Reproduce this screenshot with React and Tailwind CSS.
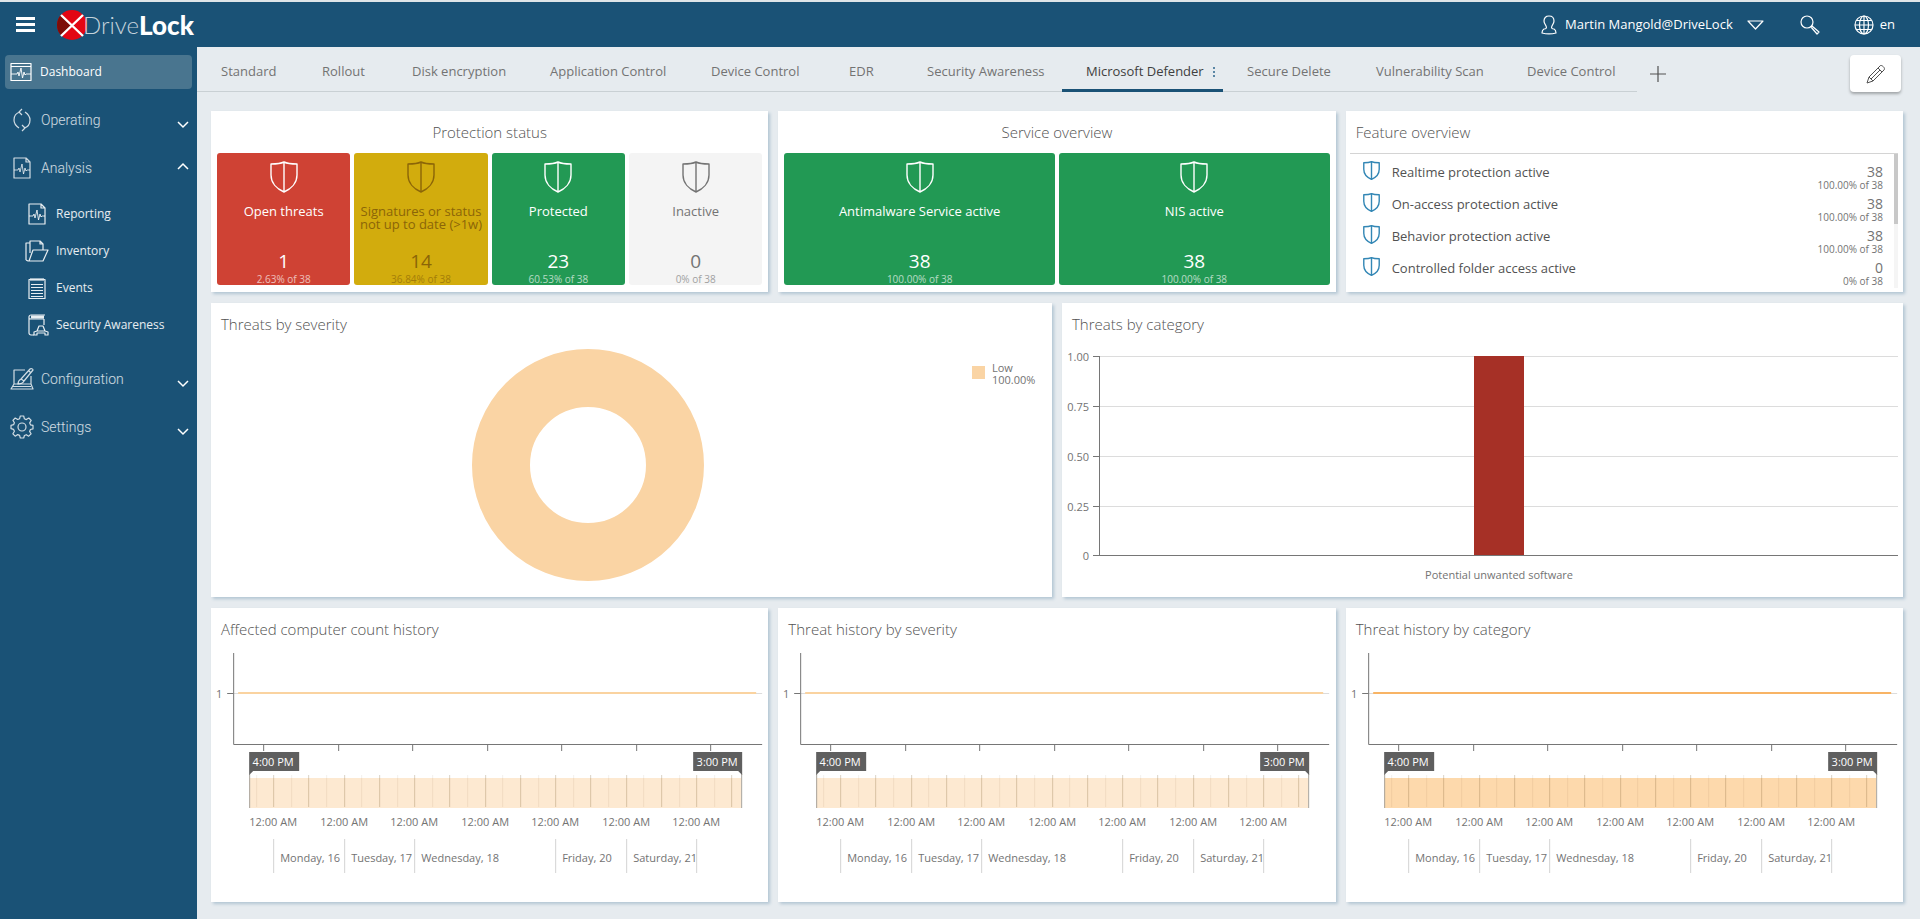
import React from 'react';

const tabs = [
  { label: 'Standard', width: 'w-[101px]' },
  { label: 'Rollout', width: 'w-[90px]' },
  { label: 'Disk encryption', width: 'w-[138px]' },
  { label: 'Application Control', width: 'w-[161px]' },
  { label: 'Device Control', width: 'w-[138px]' },
  { label: 'EDR', width: 'w-[78px]' },
  { label: 'Security Awareness', width: 'w-[159px]' },
  { label: 'Microsoft Defender', width: 'w-[161px]', active: true },
  { label: 'Secure Delete', width: 'w-[129px]' },
  { label: 'Vulnerability Scan', width: 'w-[151px]' },
  { label: 'Device Control', width: 'w-[134px]' },
];

const features = [
  { label: 'Realtime protection active', count: 38, share: '100.00% of 38' },
  { label: 'On-access protection active', count: 38, share: '100.00% of 38' },
  { label: 'Behavior protection active', count: 38, share: '100.00% of 38' },
  { label: 'Controlled folder access active', count: 0, share: '0% of 38' },
];

const Icon = ({ children, className = 'size-6', box = '0 0 24 24' }) => (
  <svg
    viewBox={box}
    className={className}
    fill="none"
    stroke="currentColor"
    strokeWidth="1.2"
    strokeLinejoin="round"
    aria-hidden="true"
  >
    {children}
  </svg>
);

const Shield = ({ className }) => (
  <Icon className={className} box="0 0 28 32">
    <path
      d="M14 1C10 3 5 3 1 3v11c0 8 6 14 13 17 7-3 13-9 13-17V3c-4 0-9 0-13-2zM14 1v30"
      vectorEffect="non-scaling-stroke"
      strokeWidth="1.4"
    />
  </Icon>
);

const DashboardIcon = () => (
  <Icon>
    <path d="M2 3.5h20v17H2zM2 6.5h20" />
    <path d="M2 14h6l1-2 1 4 2-8 1.500 10 1.500-6 1 3 1-1h5" strokeWidth="0.9" />
  </Icon>
);

const OperatingIcon = () => (
  <Icon>
    <path d="M10 4C6 5 4 8 4 12c0 4 2 6 5 8M14 20c4-1 6-4 6-8 0-4-2-6-5-8M12 1 9 4l3 3M12 23l3-3-3-3" />
  </Icon>
);

const ReportIcon = () => (
  <Icon>
    <path d="M4 2h12l4 4v16H4zM16 2v4h4" />
    <path d="M4 14h4l1-2 1 4 2-8 1.500 10 1.500-6 1 3 1-1h3" strokeWidth="0.9" />
  </Icon>
);

const InventoryIcon = () => (
  <Icon>
    <path d="M1 21V4h4V2h10l3 3v6M5 4v10M15 2v3h3M1 21l2 1h15l5-11H8L4 22" />
  </Icon>
);

const EventsIcon = () => (
  <Icon>
    <path d="M4 3.5h16v19H4zM6 2v3M8 2v3M10 2v3M12 2v3M14 2v3M16 2v3M18 2v3M6 8.5h12M6 11.5h12M6 14.5h12M6 17.5h12M6 20.5h12" />
  </Icon>
);

const AwarenessIcon = () => (
  <Icon>
    <path d="M9 22H6a2 2 0 0 1-2-2V4a2 2 0 0 1 2-2h14M19 6v6M4 5c0 1 1 1 2 1h13M6 3.3h13M6 4.600h13" />
    <path d="M9 22v-3l3-1 2-5h4l2 5 3 1v3h-3v-2h-8v2zM12 18h8" />
  </Icon>
);

const ConfigurationIcon = () => (
  <Icon>
    <path d="M15 3H4v14h17V9M4 17l-3 5h22l-2-5M3 19.500h18" />
    <path d="M8 17c0-3 1-4 3-5l9-10c1-1 3 0 3 1l-9 11c-1 2-3 3-6 3zM11 12l3 2M19 4l2 2" />
  </Icon>
);

const SettingsIcon = () => (
  <Icon>
    <path d="M10.300 1h3.400l.7 2.800 1.900.8L18.800 3l2.400 2.400-1.500 2.500.8 1.900 2.500.6v3.400l-2.600.7-.8 1.900 1.500 2.400-2.400 2.400-2.400-1.500-1.900.8-.7 2.500h-3.400l-.7-2.600-1.900-.8-2.500 1.600-2.300-2.400 1.500-2.500-.8-1.900-2.600-.7v-3.300l2.600-.7.8-1.900-1.500-2.500L5.200 3l2.500 1.500 1.900-.8z" />
    <circle cx="12" cy="12" r="4" />
  </Icon>
);

const Chevron = ({ up }) => (
  <svg
    viewBox="0 0 12 8"
    className={`ml-auto h-2 w-3 ${up ? 'mb-1 rotate-180' : 'mt-[10px]'}`}
    fill="none"
    stroke="white"
    strokeWidth="1.5"
    aria-hidden="true"
  >
    <path d="M1 1l5 5 5-5" />
  </svg>
);

const NavGroup = ({ icon, label, up, className = '' }) => (
  <button
    className={`flex h-8 w-full items-center gap-[7px] pr-2 pl-[10px] text-left font-[Roboto,sans-serif] text-[14px] font-light text-white/80 ${className}`}
  >
    {icon}
    <span>{label}</span>
    <Chevron up={up} />
  </button>
);

const NavLink = ({ icon, label }) => (
  <a href="#" className="flex h-[37px] items-center gap-[7px] pl-[25px] text-[12px] text-white/90">
    {icon}
    <span>{label}</span>
  </a>
);

const Sidebar = () => (
  <nav className="w-[197px] shrink-0 bg-[#1a5276] pt-2">
    <a
      href="#"
      className="mr-[5px] ml-[5px] flex h-[34px] items-center gap-[7px] rounded bg-[#49758f] pl-1 text-[12px] text-white"
    >
      <DashboardIcon />
      <span>Dashboard</span>
    </a>
    <NavGroup icon={<OperatingIcon />} label="Operating" className="mt-[15px]" />
    <NavGroup icon={<ReportIcon />} label="Analysis" up className="mt-4" />
    <div className="mt-[11px]">
      <NavLink icon={<ReportIcon />} label="Reporting" />
      <NavLink icon={<InventoryIcon />} label="Inventory" />
      <NavLink icon={<EventsIcon />} label="Events" />
      <NavLink icon={<AwarenessIcon />} label="Security Awareness" />
    </div>
    <NavGroup icon={<ConfigurationIcon />} label="Configuration" className="mt-5" />
    <NavGroup icon={<SettingsIcon />} label="Settings" className="mt-4" />
  </nav>
);

const Logo = () => (
  <a href="#" className="ml-[22px] flex items-center font-[Lato,sans-serif] text-[26px] leading-8 text-white">
    <svg viewBox="0 0 30 30" className="size-[30px]" aria-hidden="true">
      <circle cx="15" cy="15" r="15" fill="#e30613" />
      <path d="M15 15 4.4 4.4a15 15 0 0 0 0 21.2z" fill="#7d0d08" />
      <path d="M4 5l22 21M26 5 4 26" stroke="white" strokeWidth="2.4" />
    </svg>
    <span className="-ml-1 text-[24px] font-light text-white/75">Drive</span>
    <span className="font-black">Lock</span>
  </a>
);

const Header = () => (
  <header className="flex h-[47px] items-center border-t-2 border-[#dfe5e8] bg-[#1a5276] text-[13px] text-white">
    <button className="ml-4 flex w-[19px] flex-col gap-[3px]" aria-label="Toggle menu">
      <span className="h-[3px] w-full bg-white" />
      <span className="h-[3px] w-full bg-white" />
      <span className="h-[3px] w-full bg-white" />
    </button>
    <Logo />
    <button className="ml-auto flex items-center font-medium">
      <Icon className="mr-2 h-5 w-4" box="0 0 16 20">
        <path d="M8 1c3 0 5 2 5 5 0 2-1 3-2 5-1 2 0 3 2 3 2 1 2 2 2 4-4 1-10 1-14 0 0-2 0-3 2-4 2 0 3-1 2-3-1-2-2-3-2-5 0-3 2-5 5-5z" />
      </Icon>
      Martin Mangold@DriveLock
      <Icon className="ml-[14px] h-[10px] w-[17px]" box="0 0 17 10">
        <path d="M1 1h15L8.5 9z" />
      </Icon>
    </button>
    <button className="ml-9" aria-label="Search">
      <Icon className="size-5" box="0 0 20 20">
        <circle cx="7" cy="7" r="6" />
        <path d="M11 12l1-1 7 6-2 2z" />
      </Icon>
    </button>
    <button className="mr-[25px] ml-[34px] flex items-center gap-[6px]">
      <Icon className="size-5" box="0 0 20 20">
        <circle cx="10" cy="10" r="9" />
        <ellipse cx="10" cy="10" rx="4.5" ry="9" />
        <path d="M10 1v18M1 10h18M2.5 5.5h15M2.5 14.5h15" />
      </Icon>
      en
    </button>
  </header>
);

const TabBar = () => (
  <div className="flex">
    <div className="flex h-[45px] border-b border-[#c9d0d4]">
      {tabs.map((tab, i) => (
        <button
          key={i}
          className={`relative -mb-px h-[45px] px-6 text-left text-[13px] whitespace-nowrap ${tab.width} ${
            tab.active ? 'border-b-[3px] border-[#1a5276] pt-2 text-neutral-700' : 'pt-[5px] text-neutral-500'
          }`}
        >
          {tab.label}
          {tab.active && (
            <span className="absolute top-5 right-2 flex flex-col gap-[2px]">
              <i className="size-[2px] bg-[#5a86a5]" />
              <i className="size-[2px] bg-[#5a86a5]" />
              <i className="size-[2px] bg-[#5a86a5]" />
            </span>
          )}
        </button>
      ))}
    </div>
    <button className="ml-3 text-neutral-600" aria-label="Add tab">
      <Icon className="mt-2 size-[18px]" box="0 0 18 18">
        <path d="M9 1v16M1 9h16" />
      </Icon>
    </button>
    <button
      className="mt-2 mr-[19px] ml-auto flex h-[37px] w-[51px] items-center justify-center rounded-sm bg-white text-neutral-600 shadow-[0_2px_3px_rgba(0,0,0,0.3)]"
      aria-label="Edit dashboard"
    >
      <Icon className="size-5" box="0 0 20 20">
        <path d="M1 19l2-6L14 2c1-2 6 2 4 4L7 17zM3 13l4 4M12 4l4 4M5 15l9-9" strokeWidth="1" />
      </Icon>
    </button>
  </div>
);

const Panel = ({ title, centered, className = '', children }) => (
  <section className={`bg-white shadow-[2px_2px_3px_#b3c6d3] ${className}`}>
    <h2
      className={`flex h-[42px] items-center px-[10px] text-[15px] font-light text-neutral-600 ${
        centered ? 'justify-center' : ''
      }`}
    >
      {title}
    </h2>
    {children}
  </section>
);

const Tile = ({ label, count, share, className }) => (
  <div className={`flex h-[132px] flex-1 flex-col items-center rounded-[3px] pt-2 text-center ${className}`}>
    <Shield className="h-8 w-7" />
    <p className="mt-3 h-11 text-[13px] leading-[13px] whitespace-pre-line">{label}</p>
    <p className="text-[19px] leading-6">{count}</p>
    <p className="text-[10px] leading-3 opacity-65">{share}</p>
  </div>
);

const FeatureList = () => (
  <div className="mr-[5px] ml-1 flex h-[135px] border-t border-neutral-300">
    <ul className="flex-1 overflow-hidden pt-px">
      {features.map((f) => (
        <li key={f.label} className="flex h-8 pr-[11px] pl-[13px]">
          <Shield className="mt-[6px] h-[19px] w-[17px] text-[#3387b5]" />
          <span className="mt-[7px] ml-3 text-[13px] leading-5 text-neutral-600">{f.label}</span>
          <span className="mt-[10px] ml-auto text-right">
            <span className="block text-[14px] leading-[14px] text-neutral-500">{f.count}</span>
            <span className="block text-[10px] leading-3 text-neutral-500">{f.share}</span>
          </span>
        </li>
      ))}
    </ul>
    <div className="w-1 bg-neutral-100">
      <div className="h-[70px] bg-[#c8c8c8]" />
    </div>
  </div>
);

const SeverityChart = () => (
  <svg viewBox="0 0 841 252" className="h-[252px] w-full">
    <circle cx="377" cy="120" r="87" fill="none" stroke="#fad4a4" strokeWidth="58" />
    <rect x="761" y="21" width="13" height="13" fill="#fad4a4" />
    <g className="fill-neutral-500 text-[11px]">
      <text x="781" y="27">Low</text>
      <text x="781" y="39">100.00%</text>
    </g>
  </svg>
);

const CategoryChart = () => (
  <svg viewBox="0 0 841 252" className="h-[252px] w-full">
    {[
      ['1.00', 12],
      ['0.75', 62],
      ['0.50', 112],
      ['0.25', 162],
      ['0', 211],
    ].map(([label, y]) => (
      <g key={label}>
        <path d={`M38 ${y - 0.5}h798`} stroke="#dcdcdc" />
        <path d={`M31 ${y - 0.5}h7`} stroke="#767676" />
        <text x="27" y={y + 4} textAnchor="end" className="fill-neutral-500 text-[11px]">
          {label}
        </text>
      </g>
    ))}
    <rect x="412" y="11" width="50" height="199" fill="#a63026" />
    <path d="M37.5 11v199.5H836" fill="none" stroke="#767676" />
    <text x="437" y="234" textAnchor="middle" className="fill-neutral-500 text-[11px]">
      Potential unwanted software
    </text>
  </svg>
);

// x of midnight on the range selector, one day per step
const FIRST_DAY = 62;
const DAY = 70.5;
const dayX = (n) => Math.round(FIRST_DAY + n * DAY);

const days = [
  { label: 'Monday, 16', at: 0 },
  { label: 'Tuesday, 17', at: 1 },
  { label: 'Wednesday, 18', at: 2 },
  { label: 'Friday, 20', at: 4 },
  { label: 'Saturday, 21', at: 5 },
  { label: '', at: 6 },
];

const HistoryChart = ({ line, band }) => (
  <svg viewBox="0 0 557 252" className="h-[252px] w-full">
    <path d="M22 43.5h529" stroke="#dcdcdc" />
    <path d="M27 43h518" stroke={line} strokeWidth="2" />
    <path d="M22.5 3v91.5H551M16 43.5h6" fill="none" stroke="#767676" />
    {[52, 127, 201, 276, 350, 425, 499].map((x) => (
      <path key={x} d={`M${x + 0.5} 94v7`} stroke="#767676" />
    ))}
    <text x="8" y="48" textAnchor="middle" className="fill-neutral-500 text-[11px]">1</text>

    <rect x="38" y="128" width="492" height="30" fill={band} />
    {Array.from({ length: 28 }, (_, i) => {
      const x = Math.round(44.5 + (i * DAY) / 4) + 0.5;
      return <path key={i} d={`M${x} 125v32`} stroke="#7a5a30" strokeOpacity={i % 2 ? 0.28 : 0.09} />;
    })}
    <path d="M38.5 124v34M530.5 124v34" stroke="#a8a39c" />
    <path d="M38 102h50v19H42l-4 4zM531 102h-49v19h45l4 4z" fill="#5f5f5f" />
    <g className="fill-white text-[11px]">
      <text x="62" y="116" textAnchor="middle">4:00 PM</text>
      <text x="506" y="116" textAnchor="middle">3:00 PM</text>
    </g>

    <g className="fill-neutral-500 text-[11px]">
      {[0, 1, 2, 3, 4, 5, 6].map((n) => (
        <text key={n} x={dayX(n)} y="176" textAnchor="middle">12:00 AM</text>
      ))}
      {days.map((d) => (
        <g key={d.at}>
          <path d={`M${dayX(d.at) + 0.5} 189v34`} stroke="#d4d4d4" />
          <text x={dayX(d.at) + 7} y="212">{d.label}</text>
        </g>
      ))}
    </g>
  </svg>
);

const App = () => {
  return (
    <div className="flex min-h-screen flex-col bg-[#e6ebef] font-['Open_Sans','Noto_Sans',sans-serif]">
      <Header />
      <div className="flex flex-1">
        <Sidebar />
        <main className="min-w-0 flex-1">
          <TabBar />
          <div className="grid grid-cols-6 gap-x-[10px] gap-y-[11px] pt-[19px] pr-[17px] pb-[17px] pl-[14px]">
            <Panel title="Protection status" centered className="col-span-2 h-[181px]">
              <div className="flex gap-1 px-[6px]">
                <Tile label="Open threats" count={1} share="2.63% of 38" className="bg-[#cf4234] text-white" />
                <Tile
                  label={'Signatures or status\nnot up to date (>1w)'}
                  count={14}
                  share="36.84% of 38"
                  className="bg-[#d2ac0d] text-[#8b6508]"
                />
                <Tile label="Protected" count={23} share="60.53% of 38" className="bg-[#229954] text-white" />
                <Tile label="Inactive" count={0} share="0% of 38" className="bg-[#f4f4f4] text-neutral-500" />
              </div>
            </Panel>
            <Panel title="Service overview" centered className="col-span-2 h-[181px]">
              <div className="flex gap-1 px-[6px]">
                <Tile
                  label="Antimalware Service active"
                  count={38}
                  share="100.00% of 38"
                  className="bg-[#229954] text-white"
                />
                <Tile label="NIS active" count={38} share="100.00% of 38" className="bg-[#229954] text-white" />
              </div>
            </Panel>
            <Panel title="Feature overview" className="col-span-2 h-[181px]">
              <FeatureList />
            </Panel>
            <Panel title="Threats by severity" className="col-span-3">
              <SeverityChart />
            </Panel>
            <Panel title="Threats by category" className="col-span-3">
              <CategoryChart />
            </Panel>
            <Panel title="Affected computer count history" className="col-span-2">
              <HistoryChart line="#fad3a0" band="#fde9d1" />
            </Panel>
            <Panel title="Threat history by severity" className="col-span-2">
              <HistoryChart line="#fad3a0" band="#fde9d1" />
            </Panel>
            <Panel title="Threat history by category" className="col-span-2">
              <HistoryChart line="#f8b465" band="#fdd9ac" />
            </Panel>
          </div>
        </main>
      </div>
    </div>
  );
};

export default App;
